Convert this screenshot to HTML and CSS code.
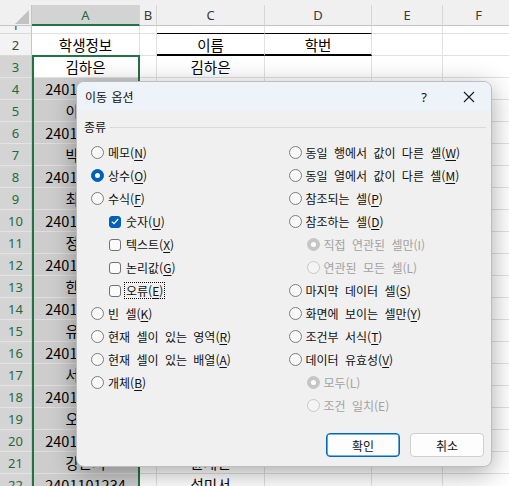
FILE: index.html
```html
<!DOCTYPE html>
<html lang="ko">
<head>
<meta charset="utf-8">
<title>이동 옵션</title>
<link rel="stylesheet" href="styles.css">
</head>
<body>
<div class="sheet">
  <div class="colbar">
    <div class="corner"><span class="tri"></span></div>
    <div class="ch a sel">A</div>
    <div class="ch b">B</div>
    <div class="ch c">C</div>
    <div class="ch d">D</div>
    <div class="ch e">E</div>
    <div class="ch f">F</div>
  </div>

  <div class="row r1"><div class="rh"><span>1</span></div><div class="a"></div><div class="b"></div><div class="c tb"></div><div class="d tb"></div><div class="e"></div><div class="f"></div></div>
  <div class="row"><div class="rh">2</div><div class="a">학생정보</div><div class="b"></div><div class="c bb">이름</div><div class="d bb">학번</div><div class="e"></div><div class="f"></div></div>
  <div class="row"><div class="rh on">3</div><div class="a">김하은</div><div class="b"></div><div class="c">김하은</div><div class="d"></div><div class="e"></div><div class="f"></div></div>
  <div class="row"><div class="rh on">4</div><div class="a s">2401101201</div><div class="b"></div><div class="c"></div><div class="d"></div><div class="e"></div><div class="f"></div></div>
  <div class="row"><div class="rh on">5</div><div class="a s">이서준</div><div class="b"></div><div class="c"></div><div class="d"></div><div class="e"></div><div class="f"></div></div>
  <div class="row"><div class="rh on">6</div><div class="a s">2401101202</div><div class="b"></div><div class="c"></div><div class="d"></div><div class="e"></div><div class="f"></div></div>
  <div class="row"><div class="rh on">7</div><div class="a s">박지민</div><div class="b"></div><div class="c"></div><div class="d"></div><div class="e"></div><div class="f"></div></div>
  <div class="row"><div class="rh on">8</div><div class="a s">2401101203</div><div class="b"></div><div class="c"></div><div class="d"></div><div class="e"></div><div class="f"></div></div>
  <div class="row"><div class="rh on">9</div><div class="a s">최유진</div><div class="b"></div><div class="c"></div><div class="d"></div><div class="e"></div><div class="f"></div></div>
  <div class="row"><div class="rh on">10</div><div class="a s">2401101204</div><div class="b"></div><div class="c"></div><div class="d"></div><div class="e"></div><div class="f"></div></div>
  <div class="row"><div class="rh on">11</div><div class="a s">정민호</div><div class="b"></div><div class="c"></div><div class="d"></div><div class="e"></div><div class="f"></div></div>
  <div class="row"><div class="rh on">12</div><div class="a s">2401101205</div><div class="b"></div><div class="c"></div><div class="d"></div><div class="e"></div><div class="f"></div></div>
  <div class="row"><div class="rh on">13</div><div class="a s">한지수</div><div class="b"></div><div class="c"></div><div class="d"></div><div class="e"></div><div class="f"></div></div>
  <div class="row"><div class="rh on">14</div><div class="a s">2401101206</div><div class="b"></div><div class="c"></div><div class="d"></div><div class="e"></div><div class="f"></div></div>
  <div class="row"><div class="rh on">15</div><div class="a s">유나연</div><div class="b"></div><div class="c"></div><div class="d"></div><div class="e"></div><div class="f"></div></div>
  <div class="row"><div class="rh on">16</div><div class="a s">2401101207</div><div class="b"></div><div class="c"></div><div class="d"></div><div class="e"></div><div class="f"></div></div>
  <div class="row"><div class="rh on">17</div><div class="a s">서도윤</div><div class="b"></div><div class="c"></div><div class="d"></div><div class="e"></div><div class="f"></div></div>
  <div class="row"><div class="rh on">18</div><div class="a s">2401101208</div><div class="b"></div><div class="c"></div><div class="d"></div><div class="e"></div><div class="f"></div></div>
  <div class="row"><div class="rh on">19</div><div class="a s">오하린</div><div class="b"></div><div class="c"></div><div class="d"></div><div class="e"></div><div class="f"></div></div>
  <div class="row"><div class="rh on">20</div><div class="a s">2401101209</div><div class="b"></div><div class="c"></div><div class="d"></div><div class="e"></div><div class="f"></div></div>
  <div class="row"><div class="rh on">21</div><div class="a s">강은서</div><div class="b"></div><div class="c">윤채린</div><div class="d"></div><div class="e"></div><div class="f"></div></div>
  <div class="row"><div class="rh on">22</div><div class="a s">2401101234</div><div class="b"></div><div class="c">설미서</div><div class="d"></div><div class="e"></div><div class="f"></div></div>

  <div class="selbox"></div>

  <div class="dialog">
    <div class="titlebar">
      <span class="title">이동 옵션</span>
      <span class="help">?</span>
      <span class="close"><svg width="12" height="12" viewBox="0 0 12 12"><path d="M1 1 L11 11 M11 1 L1 11" stroke="#1b1b1b" stroke-width="1.1" fill="none"/></svg></span>
    </div>
    <div class="dbody">
      <div class="group"><span>종류</span><span class="line"></span></div>
      <div class="opts">
        <div class="col">
          <div class="opt"><span class="radio"></span><span class="lbl">메모(<u>N</u>)</span></div>
          <div class="opt"><span class="radio on"></span><span class="lbl">상수(<u>O</u>)</span></div>
          <div class="opt"><span class="radio"></span><span class="lbl">수식(<u>F</u>)</span></div>
          <div class="opt ind"><span class="chk on"><svg width="8" height="7" viewBox="0 0 8 7"><path d="M0.8 3.6 L3 5.7 L7.2 1" stroke="#fff" stroke-width="1.2" fill="none"/></svg></span><span class="lbl box">숫자(<u>U</u>)</span></div>
          <div class="opt ind"><span class="chk"></span><span class="lbl box">텍스트(<u>X</u>)</span></div>
          <div class="opt ind"><span class="chk"></span><span class="lbl box">논리값(<u>G</u>)</span></div>
          <div class="opt ind"><span class="chk"></span><span class="lbl box focus">오류(<u>E</u>)</span></div>
          <div class="opt"><span class="radio"></span><span class="lbl">빈 셀(<u>K</u>)</span></div>
          <div class="opt"><span class="radio"></span><span class="lbl">현재 셀이 있는 영역(<u>R</u>)</span></div>
          <div class="opt"><span class="radio"></span><span class="lbl">현재 셀이 있는 배열(<u>A</u>)</span></div>
          <div class="opt"><span class="radio"></span><span class="lbl">개체(<u>B</u>)</span></div>
        </div>
        <div class="col">
          <div class="opt"><span class="radio"></span><span class="lbl">동일 행에서 값이 다른 셀(<u>W</u>)</span></div>
          <div class="opt"><span class="radio"></span><span class="lbl">동일 열에서 값이 다른 셀(<u>M</u>)</span></div>
          <div class="opt"><span class="radio"></span><span class="lbl">참조되는 셀(<u>P</u>)</span></div>
          <div class="opt"><span class="radio"></span><span class="lbl">참조하는 셀(<u>D</u>)</span></div>
          <div class="opt ind dis"><span class="radio on"></span><span class="lbl">직접 연관된 셀만(I)</span></div>
          <div class="opt ind dis"><span class="radio"></span><span class="lbl">연관된 모든 셀(L)</span></div>
          <div class="opt"><span class="radio"></span><span class="lbl">마지막 데이터 셀(<u>S</u>)</span></div>
          <div class="opt"><span class="radio"></span><span class="lbl">화면에 보이는 셀만(<u>Y</u>)</span></div>
          <div class="opt"><span class="radio"></span><span class="lbl">조건부 서식(<u>T</u>)</span></div>
          <div class="opt"><span class="radio"></span><span class="lbl">데이터 유효성(<u>V</u>)</span></div>
          <div class="opt ind dis"><span class="radio on"></span><span class="lbl">모두(L)</span></div>
          <div class="opt ind dis"><span class="radio"></span><span class="lbl">조건 일치(E)</span></div>
        </div>
      </div>
      <div class="btns">
        <button class="btn def">확인</button>
        <button class="btn">취소</button>
      </div>
    </div>
  </div>
</div>
</body>
</html>
```

FILE: styles.css
```css
html, body {
  margin: 0;
  padding: 0;
  background: #ffffff;
}
body {
  font-family: "Noto Sans CJK KR", "Noto Sans", sans-serif;
}
.sheet {
  position: relative;
  width: 509px;
  height: 486px;
  overflow: hidden;
  background: #ffffff;
}

/* column header bar */
.colbar {
  display: flex;
  height: 26px;
  box-sizing: border-box;
  padding-top: 5px;
  background: #f0f0f0;
}
.colbar > div {
  flex: none;
  height: 21px;
  box-sizing: border-box;
  border-right: 1px solid #d6d6d6;
  border-bottom: 1px solid #c4c4c4;
  display: flex;
  align-items: center;
  justify-content: center;
  font-family: "Noto Sans", sans-serif;
  font-size: 13px;
  color: #3a3a3a;
}
.colbar > .corner {
  width: 32px;
  justify-content: flex-end;
  align-items: flex-end;
  padding: 0 2px 1px 0;
  border-right-color: #c4c4c4;
}
.tri {
  width: 0;
  height: 0;
  border-left: 14px solid transparent;
  border-bottom: 14px solid #c2c2c2;
}
.colbar > .sel {
  background: #d3d3d3;
  color: #1e6b41;
  border-bottom: 2px solid #217346;
}

/* column widths */
.a { width: 108px; }
.b { width: 17px; }
.c { width: 108px; }
.d { width: 107px; }
.e { width: 71px; }
.f { width: 72px; }

/* rows */
.row {
  display: flex;
  height: 22px;
}
.row > div {
  flex: none;
  box-sizing: border-box;
  border-right: 1px solid #e1e1e1;
  border-bottom: 1px solid #e1e1e1;
  display: flex;
  align-items: center;
  justify-content: center;
  white-space: nowrap;
  overflow: hidden;
  font-size: 14.5px;
  color: #000;
}
.row > .rh {
  width: 32px;
  background: #f3f3f3;
  border-right-color: #c6c6c6;
  border-bottom-color: #dadada;
  font-family: "Noto Sans", sans-serif;
  font-size: 13px;
  color: #444;
}
.row > .rh.on {
  background: #d4d4d4;
  color: #1e6b41;
  border-bottom-color: #e4e4e4;
}
.row.r1 {
  height: 8px;
}
.row.r1 > div {
  align-items: flex-end;
}
.row.r1 .rh span {
  line-height: 22px;
  display: block;
  margin-bottom: -3px;
}
.row > .tb {
  border-bottom: 1px solid #000;
}
.row > .bb {
  border-bottom: 2px solid #000;
}
.row > .a.s {
  background: #cdcdcd;
  border-bottom-color: #dedede;
}

.selbox {
  position: absolute;
  left: 32px;
  top: 55px;
  width: 108px;
  height: 440px;
  box-sizing: border-box;
  border: 2px solid #217346;
}

/* dialog */
.dialog {
  position: absolute;
  left: 76px;
  top: 81px;
  width: 416px;
  height: 386px;
  box-sizing: border-box;
  border: 1px solid #bdbdbd;
  border-radius: 8px;
  background: #f0f0f0;
  box-shadow: 0 6px 26px rgba(0, 0, 0, 0.34);
  display: flex;
  flex-direction: column;
  overflow: hidden;
  font-size: 12px;
  color: #111;
  word-spacing: 3px;
}
.titlebar {
  flex: none;
  height: 29px;
  background: #eef2f9;
  display: flex;
  align-items: center;
  padding: 0 16px 0 8px;
}
.title {
  line-height: 16px;
  word-spacing: 1px;
}
.help {
  margin-left: auto;
  width: 12px;
  text-align: center;
  font-family: "Noto Sans", sans-serif;
  font-size: 13px;
}
.close {
  margin-left: 33px;
  width: 12px;
  height: 12px;
  display: flex;
}
.dbody {
  flex: 1;
  display: flex;
  flex-direction: column;
  padding: 8px 5px 9px 7px;
}
.group {
  display: flex;
  align-items: center;
  height: 16px;
  line-height: 16px;
}
.group .line {
  flex: 1;
  height: 1px;
  background: #d9d9d9;
  margin-left: 4px;
}
.opts {
  display: flex;
  margin: 6px 0 0 7px;
}
.col {
  width: 202px;
  display: flex;
  flex-direction: column;
}
.opt {
  height: 23px;
  display: flex;
  align-items: center;
  white-space: nowrap;
}
.opt.ind {
  padding-left: 18px;
}
.lbl {
  line-height: 15px;
}
.lbl u {
  text-decoration-thickness: 1px;
  text-underline-offset: 2px;
}
.lbl.box {
  border: 1px dotted transparent;
  padding: 0 1px;
}
.lbl.focus {
  border-color: #000;
}
.radio {
  flex: none;
  position: relative;
  width: 13px;
  height: 13px;
  box-sizing: border-box;
  border-radius: 50%;
  border: 1px solid #7d7d7d;
  background: #f8f8f8;
  margin-right: 4px;
}
.radio.on {
  background: #005fb8;
  border-color: #005fb8;
}
.radio.on::after {
  content: "";
  position: absolute;
  left: 3px;
  top: 3px;
  width: 5px;
  height: 5px;
  border-radius: 50%;
  background: #ffffff;
}
.dis {
  color: #a2a2a2;
}
.dis .radio {
  border-color: #c8c8c8;
  background: #f4f4f4;
}
.dis .radio.on {
  background: #c6c6c6;
  border-color: #c6c6c6;
}
.chk {
  flex: none;
  width: 12px;
  height: 12px;
  box-sizing: border-box;
  border: 1px solid #727272;
  border-radius: 3px;
  background: #fbfbfb;
  margin-right: 3px;
  display: flex;
  align-items: center;
  justify-content: center;
}
.chk.on {
  background: #005fb8;
  border-color: #005fb8;
}
.btns {
  margin-top: auto;
  margin-right: 2px;
  display: flex;
  justify-content: flex-end;
  gap: 10px;
}
.btn {
  width: 74px;
  height: 24px;
  box-sizing: border-box;
  padding: 0;
  border: 1px solid #d0d0d0;
  border-radius: 4px;
  background: #fdfdfd;
  font-family: "Noto Sans CJK KR", "Noto Sans", sans-serif;
  font-size: 12px;
  color: #111;
}
.btn.def {
  border-color: #0067c0;
  box-shadow: inset 0 0 0 0.6px #0067c0;
}
```
